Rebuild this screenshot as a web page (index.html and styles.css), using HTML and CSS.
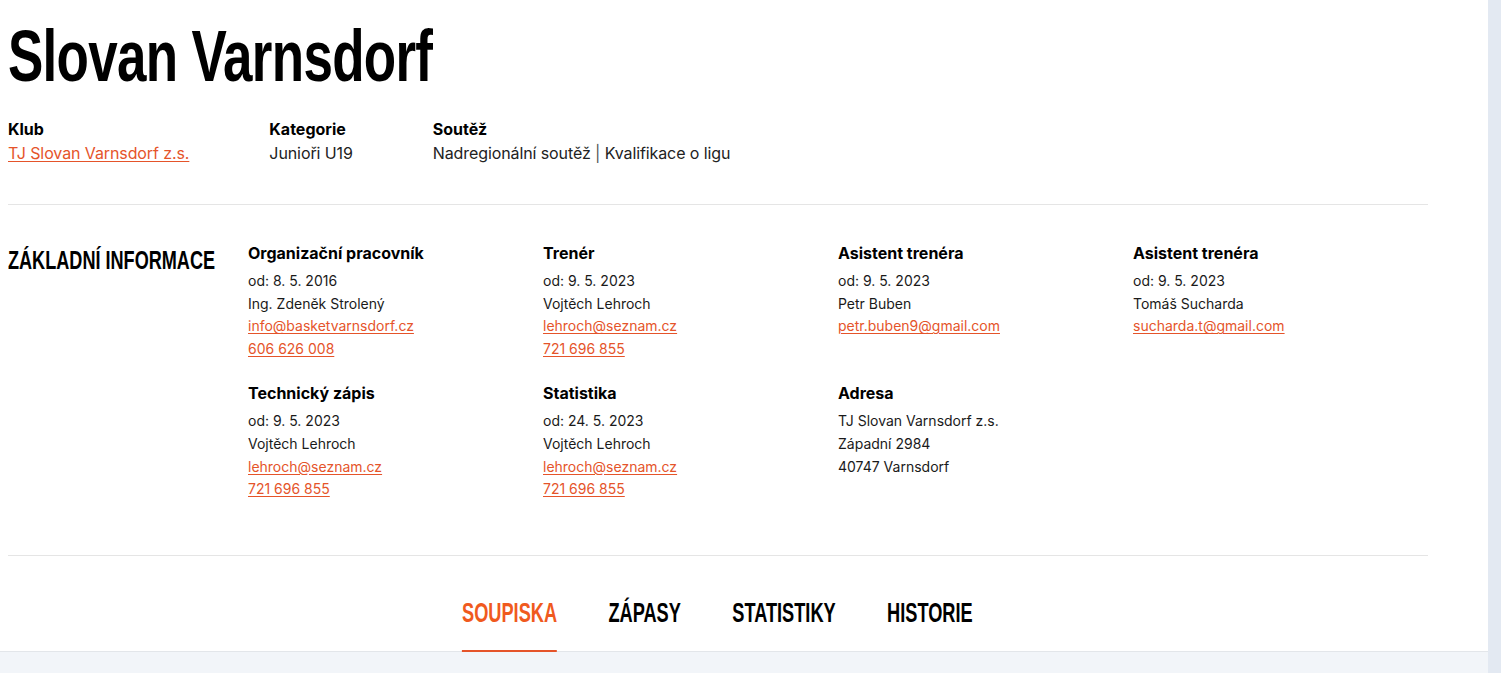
FILE: index.html
```html
<!DOCTYPE html>
<html lang="cs">
<head>
  <meta charset="UTF-8">
  <title>Slovan Varnsdorf</title>
  <link rel="stylesheet" href="styles.css">
</head>
<body>
  <div class="page">
    <div class="content">
      <header class="team-head">
        <h1 class="team-title">Slovan Varnsdorf</h1>
        <div class="meta">
          <div class="meta-item">
            <div class="meta-label">Klub</div>
            <a href="#" class="meta-value">TJ Slovan Varnsdorf z.s.</a>
          </div>
          <div class="meta-item">
            <div class="meta-label">Kategorie</div>
            <div class="meta-value">Junioři U19</div>
          </div>
          <div class="meta-item">
            <div class="meta-label">Soutěž</div>
            <div class="meta-value">Nadregionální soutěž <span class="sep">|</span> Kvalifikace o ligu</div>
          </div>
        </div>
      </header>

      <section class="info">
        <div class="info-side">
          <h2 class="info-title">Základní informace</h2>
        </div>
        <div class="info-grid">
          <div class="person">
            <h3>Organizační pracovník</h3>
            <p>od: 8. 5. 2016</p>
            <p>Ing. Zdeněk Strolený</p>
            <p><a href="#">info@basketvarnsdorf.cz</a></p>
            <p><a href="#">606 626 008</a></p>
          </div>
          <div class="person">
            <h3>Trenér</h3>
            <p>od: 9. 5. 2023</p>
            <p>Vojtěch Lehroch</p>
            <p><a href="#">lehroch@seznam.cz</a></p>
            <p><a href="#">721 696 855</a></p>
          </div>
          <div class="person">
            <h3>Asistent trenéra</h3>
            <p>od: 9. 5. 2023</p>
            <p>Petr Buben</p>
            <p><a href="#">petr.buben9@gmail.com</a></p>
          </div>
          <div class="person">
            <h3>Asistent trenéra</h3>
            <p>od: 9. 5. 2023</p>
            <p>Tomáš Sucharda</p>
            <p><a href="#">sucharda.t@gmail.com</a></p>
          </div>
          <div class="person">
            <h3>Technický zápis</h3>
            <p>od: 9. 5. 2023</p>
            <p>Vojtěch Lehroch</p>
            <p><a href="#">lehroch@seznam.cz</a></p>
            <p><a href="#">721 696 855</a></p>
          </div>
          <div class="person">
            <h3>Statistika</h3>
            <p>od: 24. 5. 2023</p>
            <p>Vojtěch Lehroch</p>
            <p><a href="#">lehroch@seznam.cz</a></p>
            <p><a href="#">721 696 855</a></p>
          </div>
          <div class="person">
            <h3>Adresa</h3>
            <p>TJ Slovan Varnsdorf z.s.</p>
            <p>Západní 2984</p>
            <p>40747 Varnsdorf</p>
          </div>
        </div>
      </section>

      <nav class="tabs">
        <a href="#" class="tab active">Soupiska</a>
        <a href="#" class="tab">Zápasy</a>
        <a href="#" class="tab">Statistiky</a>
        <a href="#" class="tab">Historie</a>
      </nav>
    </div>
    <div class="below"></div>
  </div>
  <div class="rail"></div>
</body>
</html>
```

FILE: styles.css
```css
html, body {
  height: 100%;
}
body {
  margin: 0;
  display: flex;
  font-family: Inter, "Noto Sans", Arial, sans-serif;
  color: #111;
  background-color: #fff;
  overflow: hidden;
}
a {
  color: #e5542a;
  text-decoration: underline;
  text-underline-offset: 2px;
  text-decoration-thickness: 1px;
}
.page {
  flex: 1;
  display: flex;
  flex-direction: column;
}
.content {
  padding: 0 60px 0 8px;
  border-bottom: 1px solid #e3e6ea;
}
.below {
  flex: 1;
  background-color: #f2f5f9;
}
.rail {
  width: 13px;
  background-color: #e3e9f2;
}

/* nadpisovy font nemame uzky, tak ho stahneme pres scaleX */
.team-title,
.info-title,
.tabs {
  font-family: "Liberation Sans", Arial, sans-serif;
  font-weight: bold;
  color: #000;
}

/* hlavicka tymu */
.team-head {
  padding-top: 18px;
  padding-bottom: 39px;
  border-bottom: 1px solid #e5e5e5;
}
.team-title {
  margin: 0;
  font-size: 73px;
  line-height: 76px;
  letter-spacing: -1px;
  white-space: nowrap;
  transform: scaleX(0.726);
  transform-origin: left center;
}
.meta {
  display: flex;
  margin-top: 23px;
}
.meta-item {
  margin-right: 80px;
}
.meta-label {
  font-weight: 700;
  font-size: 16px;
  line-height: 24px;
  color: #000;
}
.meta-value {
  font-size: 16px;
  line-height: 24px;
  letter-spacing: -0.1px;
  color: #222;
}
a.meta-value {
  color: #e5542a;
}
.sep {
  color: #555;
}

/* zakladni informace */
.info {
  display: flex;
  padding: 36px 0 54px;
  border-bottom: 1px solid #e5e5e5;
}
.info-side {
  width: 240px;
  flex: none;
}
.info-title {
  margin: 4px 0 0;
  font-size: 26px;
  line-height: 30px;
  white-space: nowrap;
  text-transform: uppercase;
  transform: scaleX(0.696);
  transform-origin: left center;
}
.info-grid {
  flex: 1;
  display: grid;
  grid-template-columns: repeat(4, 295px);
  row-gap: 21px;
}
.person h3 {
  margin: 0 0 5px;
  font-size: 16px;
  line-height: 24px;
  font-weight: 700;
  color: #000;
}
.person p {
  margin: 0;
  font-size: 14px;
  line-height: 22.6px;
  color: #1a1a1a;
}

/* zalozky */
.tabs {
  display: flex;
  justify-content: center;
  gap: 79px;
  padding-right: 2px;
  transform: scaleX(0.65);
  transform-origin: center;
}
.tab {
  padding: 42px 0 22px;
  font-size: 28px;
  line-height: 30px;
  text-transform: uppercase;
  text-decoration: none;
  color: #000;
  border-bottom: 2px solid transparent;
  margin-bottom: -1px;
}
.tab.active {
  color: #f05a1e;
  border-bottom-color: #e5542a;
}
```
